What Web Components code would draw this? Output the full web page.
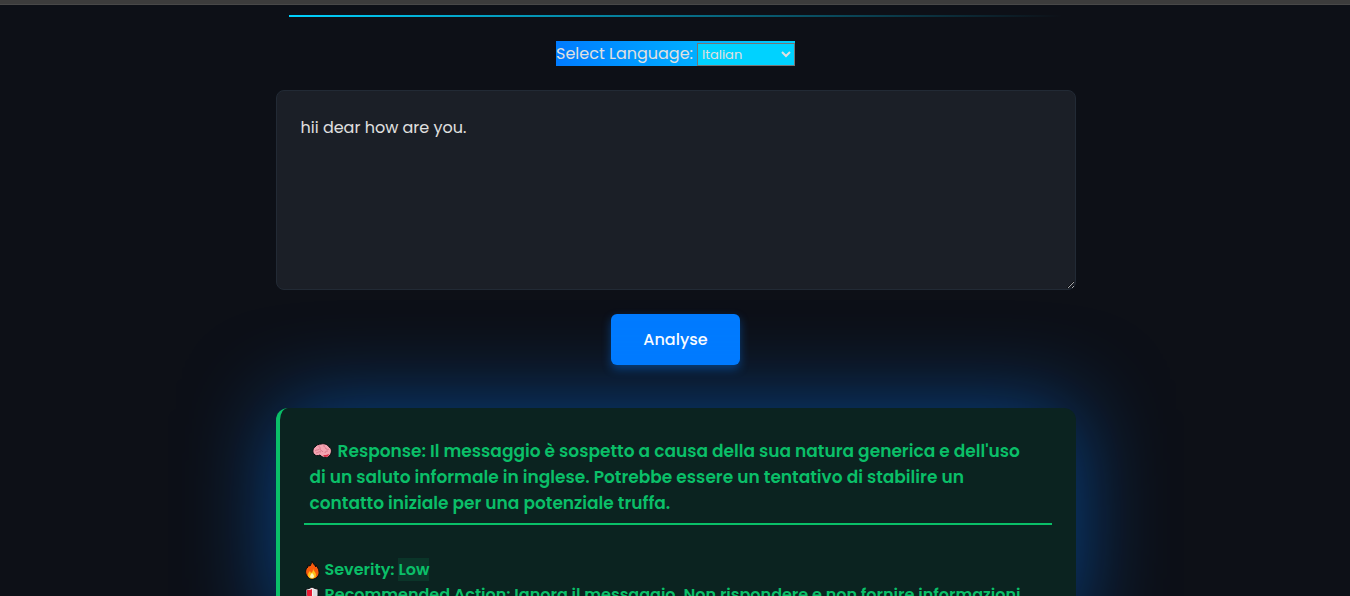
<!DOCTYPE html>
<html lang="en">
<head>
<meta charset="utf-8">
<meta name="viewport" content="width=device-width, initial-scale=1">
<title>Message analyser</title>
<style>
html{scrollbar-width:none;background:#0d1017}
body{margin:0;font-family:Poppins,Inter,"Open Sans",sans-serif;font-size:16px;color:#e0e0e0}
</style>
</head>
<body>
<analyser-page></analyser-page>
<script>
const define = (name, html) => customElements.define(name, class extends HTMLElement {
  constructor() {
    super();
    const t = document.createElement('template');
    t.innerHTML = html;
    this.attachShadow({mode: 'open'}).append(t.content.cloneNode(true));
  }
});

define('gradient-rule', `<style>
:host{display:block;height:2px;background:linear-gradient(90deg,#00d2ff,transparent)}
</style>`);

define('language-picker', `<style>
:host{display:flex;align-items:flex-end;width:239px;height:25px;box-sizing:border-box;background:linear-gradient(90deg,#007bff,#00d2ff);color:#e0e0e0}
label{flex:1;line-height:25px;white-space:nowrap}
.box{position:relative;display:flex;width:98px;height:23px}
select{appearance:none;width:100%;box-sizing:border-box;border:1px solid #767676;border-radius:0;background:#00d2ff;color:#e0e0e0;font:13px Poppins,Inter,sans-serif;padding:0 20px 0 4px;margin:0}
option{color:#111;background:#fff}
svg{position:absolute;right:4px;top:8px;pointer-events:none}
</style>
<label for="lang">Select Language:</label>
<span class="box"><select id="lang"><option>Italian</option><option>English</option><option>French</option><option>German</option><option>Spanish</option></select>
<svg width="10" height="7" viewBox="0 0 10 7" aria-hidden="true"><path d="M1 1l4 4 4-4" fill="none" stroke="#e0e0e0" stroke-width="2"/></svg></span>`);

define('message-box', `<style>
:host{display:block}
textarea{display:block;width:100%;height:200px;box-sizing:border-box;margin:0;padding:24px;border:1px solid #222a35;border-radius:8px;background:#1b1f27;color:#e0e0e0;font:16px/26px Poppins,Inter,sans-serif;resize:vertical;outline:0}
</style><textarea aria-label="Message">hii dear how are you.</textarea>`);

define('primary-button', `<style>
:host{display:block}
button{display:block;border:0;border-radius:6px;background:#007bff;color:#fff;padding:13px 32px 12px;min-width:129px;font:500 16px/26px Poppins,Inter,sans-serif;box-shadow:0 4px 10px rgba(0,123,255,.4);cursor:pointer}
</style><button type="button"><slot></slot></button>`);

define('result-card', `<style>
:host{display:block;box-sizing:border-box;border-left:4px solid #0abf68;border-radius:12px;background:#0b2320;color:#0abf68;padding:24px;box-shadow:0 0 90px rgba(0,123,255,.5);font-weight:600}
h2{margin:0 0 32px;padding:6px 6px 7px;border-bottom:2px solid #0abf68;font-size:17px;line-height:26px;font-weight:600}
</style><h2><slot name="title"></slot></h2><slot></slot>`);

define('result-row', `<style>
:host{display:flex;align-items:center;gap:5px;line-height:25px}
slot[name=icon]::slotted(*){flex:none}
</style><slot name="icon"></slot><span><slot></slot></span>`);

const icons = {
  brain: [20, 16, `<path d="M2 11C0 9 1 5 3 4c1-2 4-3 6-3 4-1 7 1 8 3 3 1 3 6 1 8-1 2-3 3-5 2-2 1-4-1-5-2-2 1-5 1-6-1Z" fill="#f4a3b1" stroke="#080b0e"/><path d="M11 12c2 0 4 0 6-1 0 2-2 3-4 3Z" fill="#dc2f48"/><path d="M3 8c2-2 3 0 4-2M7 2c-1 2 2 2 1 4 0 2 2 1 3 3M12 2c-1 2 2 2 2 4 1 0 2 1 3 0M4 10c2 0 3-2 5-1M13 10c0-2 2-2 3-2" fill="none" stroke="#d36f83" stroke-width=".8"/>`],
  fire: [16, 20, `<path d="M8 1c1 3 3 4 4 6V5c3 4 4 8 2 11-2 4-9 4-11 0C1 13 1 9 4 7V5l2 1c1-2 2-3 2-5Z" fill="#f85c0c" stroke="#080b0e"/><path d="M9 8c0 3 3 4 3 7 0 5-8 5-8 0 0-2 1-3 2-4l1 2c2-1 2-3 2-5Z" fill="#ffc21a"/><path d="M8 13c4 4 1 5 0 5-3 0-2-3 0-5Z" fill="#fff5b8"/>`],
  shield: [16, 18, `<path d="M2 3c3 0 4-1 6-2 2 1 3 2 6 2v6c0 4-3 7-6 8-3-1-6-4-6-8Z" fill="#f2f2f2" stroke="#080b0e"/><path d="M3 4c2 0 4 0 5-1v12c-3-2-5-4-5-6Z" fill="#e81c35"/><path d="M9 3c1 1 2 1 4 1v5c0 2-2 5-4 6Z" fill="#dedbe0"/>`]
};
customElements.define('emoji-icon', class extends HTMLElement {
  constructor() {
    super();
    this.attachShadow({mode: 'open'});
  }
  connectedCallback() {
    const [w, h, art] = icons[this.getAttribute('name')];
    this.shadowRoot.innerHTML = `<style>:host{display:inline-block;vertical-align:-2px}svg{display:block}</style><svg width="${w}" height="${h}" viewBox="0 0 ${w} ${h}" aria-hidden="true">${art}</svg>`;
  }
});

define('analyser-page', `<style>
:host{display:block;min-height:100vh}
.chrome{height:4px;background:#3c3c3c;border-bottom:1px solid #484848}
main{display:flex;flex-direction:column;align-items:center;width:calc(100% - 32px);max-width:800px;margin:10px auto 0;padding:0 0 40px 1px}
gradient-rule{align-self:stretch;margin:0 13px 24px}
message-box{align-self:stretch;margin:24px 0}
result-card{align-self:stretch;margin-top:43px}
.brain{margin:0 6px 0 2px}
mark{display:inline-block;line-height:23px;background:#0b3529;color:inherit}
</style>
<div class="chrome"></div>
<main>
<gradient-rule></gradient-rule>
<language-picker></language-picker>
<message-box></message-box>
<primary-button>Analyse</primary-button>
<result-card>
<span slot="title"><emoji-icon class="brain" name="brain"></emoji-icon>Response: Il messaggio è sospetto a causa della sua natura generica e dell'uso<br>di un saluto informale in inglese. Potrebbe essere un tentativo di stabilire un<br>contatto iniziale per una potenziale truffa.</span>
<result-row><emoji-icon slot="icon" name="fire"></emoji-icon>Severity: <mark>Low</mark></result-row>
<result-row><emoji-icon slot="icon" name="shield"></emoji-icon>Recommended Action: Ignora il messaggio. Non rispondere e non fornire informazioni</result-row>
</result-card>
</main>`);
</script>
</body>
</html>
